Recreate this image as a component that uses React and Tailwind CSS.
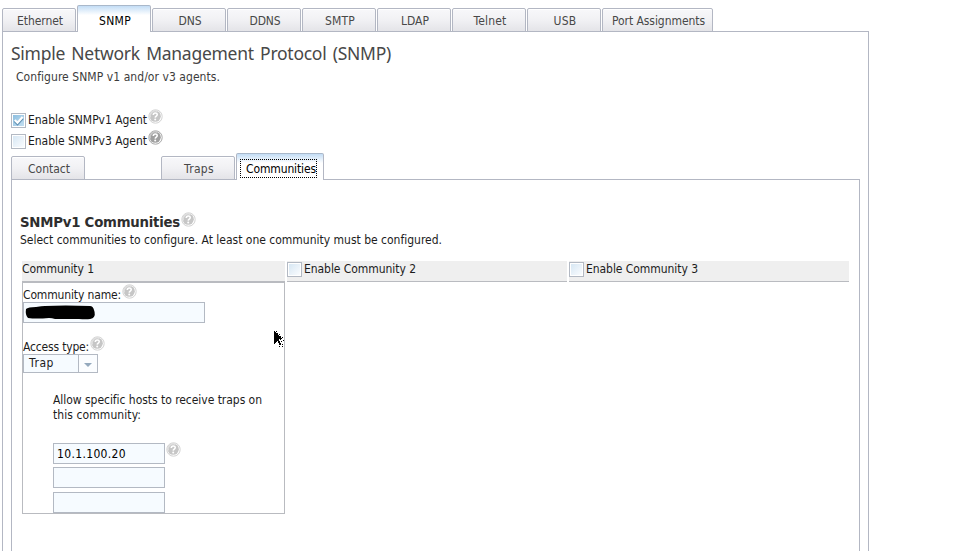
import { useLayoutEffect, useRef, useState } from 'react';
import clsx from 'clsx';

// A single line of text whose tracking is adjusted to fill a given width.
function Line({ w, className, children }) {
  const ref = useRef(null);
  const [spacing, setSpacing] = useState(0);
  useLayoutEffect(() => {
    const natural = ref.current.getBoundingClientRect().width;
    setSpacing((w - natural) / children.length);
  }, [w, children]);
  return (
    <span
      ref={ref}
      className={clsx('block w-max shrink-0 whitespace-pre', className)}
      style={{ letterSpacing: spacing }}
    >
      {children}
    </span>
  );
}

function Help({ dark, className }) {
  return (
    <svg viewBox="0 0 15 15" className={clsx('size-[15px] shrink-0', className)}>
      <circle cx="7.5" cy="7.5" r="6.7" fill="#fff" stroke={dark ? '#a8a8a8' : '#d2d2d2'} />
      <circle cx="7.2" cy="7.2" r="5.6" fill={dark ? '#a0a0a0' : '#c6c6c6'} />
      <path d="M2.4 8.5A5 5 0 0 1 9.5 2.6" stroke={dark ? '#c8c8c8' : '#e0e0e0'} strokeWidth="1.2" fill="none" />
      <path
        d="M5.3 6C5.3 3.2 9.4 3.4 9.2 5.8C9.1 7.1 7.3 7 7.2 8.6"
        stroke="#fff"
        strokeWidth="1.6"
        fill="none"
      />
      <circle cx="7.2" cy="10.6" r="1" fill="#fff" />
    </svg>
  );
}

function Checkbox({ checked }) {
  return (
    <span className="block size-[15px] shrink-0 border border-[#b3b9c3] bg-white p-px">
      <span
        className={clsx(
          'block size-full',
          checked
            ? 'bg-linear-to-br from-[#8dbfe0] to-[#c3dff1]'
            : 'bg-linear-to-br from-[#d7e7f3] to-[#fafcfe]'
        )}
      >
        {checked && (
          <svg viewBox="0 0 11 11" className="size-[11px]">
            <path d="M1.8 5.8L4.5 8.6L9.6 3" stroke="#5f8fb0" strokeWidth="3" fill="none" />
            <path d="M1.8 5L4.5 7.7L9.6 2.1" stroke="#fff" strokeWidth="2.3" fill="none" />
          </svg>
        )}
      </span>
    </span>
  );
}

function Tab({ label, w, active, focused, className }) {
  return (
    <div
      className={clsx(
        'flex shrink-0 justify-center rounded-t-[2px] border border-[#b3b7c3]',
        active
          ? 'h-[27px] border-b-0 border-t-[#a9b8ca] bg-linear-to-b from-[#c3ddf5] to-white to-35% pt-[8px] text-black'
          : 'h-[24px] bg-linear-to-b from-[#f8f8fa] via-[#f1f1f4] to-[#e4e4e8] pt-[5px] text-[#484848] inset-shadow-[0_1px_0_#ffffff]',
        !focused && 'pl-[2px]',
        className
      )}
    >
      {focused ? (
        <span className="-mt-[3px] mr-[3px] flex h-[19px] w-[77px] justify-end border border-dotted border-black pt-[2px]">
          <Line w={w}>{label}</Line>
        </span>
      ) : (
        <Line w={w}>{label}</Line>
      )}
    </div>
  );
}

const tabs = [
  ['Ethernet', 46],
  ['SNMP', 32],
  ['DNS', 23],
  ['DDNS', 31],
  ['SMTP', 30],
  ['LDAP', 28],
  ['Telnet', 33],
  ['USB', 23],
];

function Field({ className, children }) {
  return (
    <div className={clsx('h-[21px] border border-[#b3b9c3] bg-[#f6fbff]', className)}>{children}</div>
  );
}

function Pointer() {
  return (
    <svg viewBox="0 0 11 19" shapeRendering="crispEdges" className="absolute top-[48px] left-[251px] h-[19px] w-[11px]">
      <path
        d="M0 0h1v1h1v1h1v1h1v1h1v1h1v1h1v1h1v1h-3v2h1v2h1v2h-2v-2h-1v-2h-1v1h-1v1h-1v1h-1z"
        fill="#000"
      />
      <path
        d="M2 0h1v1h-1zM3 2h1v1h-1zM5 3h1v1h-1zM6 5h1v1h-1zM8 6h1v1h-1zM6 8h1v1h-1zM9 9h1v1h-1zM7 10h1v1h-1zM6 12h1v1h-1zM8 13h1v1h-1zM5 15h1v1h-1zM8 15h1v1h-1z"
        fill="#000"
      />
    </svg>
  );
}

function OptionalCommunity({ n }) {
  return (
    <div className="flex h-[21px] w-[280px] gap-[2px] border-b border-[#b9bbc0] bg-[#efefef] pt-px">
      <Checkbox />
      <Line w={112}>{`Enable Community ${n}`}</Line>
    </div>
  );
}

function CommunityForm() {
  return (
    <div className="relative h-[232px] w-[263px] border border-[#b9bbc0]">
      <div className="flex h-[19px] gap-[1px] pt-px">
        <Line w={98} className="pt-[4px]">Community name:</Line>
        <Help />
      </div>
      <Field className="w-[182px]">
        <svg viewBox="0 0 72 19" className="h-[19px] w-[72px]">
          <path
            d="M2 6Q4 4 12 4Q18 3 21 3Q40 2 66 3Q69 3 70 7Q72 12 69 15Q66 17 55 16H31Q28 15 25 15Q12 16 4 15Q1 12 2 6Z"
            fill="#000"
          />
        </svg>
      </Field>
      <div className="mt-[13px] flex h-[18px] gap-[1px]">
        <Line w={66} className="pt-[4px]">Access type:</Line>
        <Help />
      </div>
      <div className="flex h-[19px] w-[75px] border border-[#b3b9c3] bg-[#f6fbff]">
        <div className="w-[55px] border-r border-[#b3b9c3] pt-px pl-[5px]">
          <Line w={25}>Trap</Line>
        </div>
        <div className="flex flex-1 items-center justify-center bg-[#fbfdff] pt-[3px]">
          <svg viewBox="0 0 8 4" className="h-[4px] w-[8px]">
            <path d="M0 0H8L4 4Z" fill="#94a9bd" />
          </svg>
        </div>
      </div>
      <div className="mt-[20px] ml-[30px] leading-[15px]">
        <Line w={209}>Allow specific hosts to receive traps on</Line>
        <Line w={88}>this community:</Line>
      </div>
      <div className="mt-[20px] ml-[30px] flex gap-[1px]">
        <Field className="w-[112px] pt-[3px] pl-[3px] text-black">
          <Line w={69}>10.1.100.20</Line>
        </Field>
        <Help className="-mt-px" />
      </div>
      <Field className="mt-[3px] ml-[30px] w-[112px]" />
      <Field className="mt-[4px] ml-[30px] w-[112px]" />
      <Pointer />
    </div>
  );
}

export default function App() {
  return (
    <div className="h-[551px] w-[955px] overflow-hidden bg-white pt-[5px] pl-[2px] font-['DejaVu_Sans_Condensed','DejaVu_Sans',sans-serif] text-[12px] leading-[14px] text-[#1c1c1c] [font-stretch:condensed]">
      <div className="-mb-px flex h-[27px] items-end gap-px">
        {tabs.map(([label, w]) => (
          <Tab key={label} label={label} w={w} active={label === 'SNMP'} className="w-[74px]" />
        ))}
        <Tab label="Port Assignments" w={93} className="w-[111px]" />
      </div>
      <div className="flex">
        <div className="h-[520px] w-[75px] border-t border-l border-[#b3b7c3]" />
        <div className="-ml-[75px] h-[520px] w-[867px] border-r border-[#b3b7c3]">
          <div className="ml-[149px] border-t border-[#b3b7c3]" />
          <div className="pl-[9px]">
            <Line w={380} className="pt-[9px] font-['Noto_Sans',sans-serif] text-[17.5px] leading-[24px] text-[#484848] [word-spacing:2px]">
              Simple Network Management Protocol (SNMP)
            </Line>
            <Line w={204} className="mt-[5px] ml-[5px] text-[#3c3c3c]">
              Configure SNMP v1 and/or v3 agents.
            </Line>
            <div className="mt-[26px] flex h-[21px] pt-[3px]">
              <Checkbox checked />
              <Line w={119} className="ml-[2px]">Enable SNMPv1 Agent</Line>
              <Help className="ml-px -mt-[4px]" />
            </div>
            <div className="flex h-[22px] pt-[3px]">
              <Checkbox />
              <Line w={119} className="ml-[2px]">Enable SNMPv3 Agent</Line>
              <Help dark className="ml-px -mt-[4px]" />
            </div>
            <div className="-mb-px flex h-[27px] items-end">
              <Tab label="Contact" w={42} className="w-[74px]" />
              <Tab label="Traps" w={30} className="ml-[76px] w-[74px]" />
              <Tab label="Communities" w={70} active focused className="ml-px w-[88px]" />
            </div>
            <div className="flex">
              <div className="h-[372px] w-[225px] border-t border-l border-[#b3b7c3]" />
              <div className="-ml-[225px] h-[372px] w-[849px] border-r border-[#b3b7c3]">
                <div className="ml-[312px] border-t border-[#b3b7c3]" />
                <div className="flex pt-[32px] pl-[9px]">
                  <Line w={160} className="pt-[2px] font-['DejaVu_Sans',sans-serif] text-[13.3px] leading-[17px] font-bold text-[#2e2e2e] [font-stretch:normal]">
                    SNMPv1 Communities
                  </Line>
                  <Help className="ml-px" />
                </div>
                <Line w={422} className="mt-[2px] ml-[9px]">
                  Select communities to configure. At least one community must be configured.
                </Line>
                <div className="mt-[14px] ml-[11px] flex gap-[2px]">
                  <div>
                    <div className="h-[21px] w-[263px] border-b border-[#b9bbc0] bg-[#efefef] pt-px">
                      <Line w={72}>Community 1</Line>
                    </div>
                    <CommunityForm />
                  </div>
                  <OptionalCommunity n={2} />
                  <OptionalCommunity n={3} />
                </div>
              </div>
            </div>
          </div>
        </div>
      </div>
    </div>
  );
}
